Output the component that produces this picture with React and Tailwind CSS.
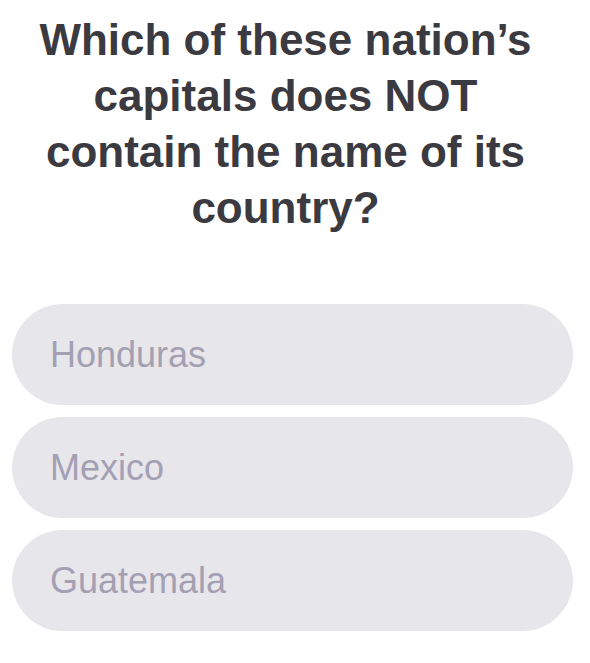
import React from "react";

const options = ["Honduras", "Mexico", "Guatemala"];

const OptionPill = ({ label }) => (
  <button
    type="button"
    className="flex h-[101px] w-full items-center rounded-full bg-[#e7e6ea] pl-[38px] text-left text-[36px] leading-none text-[#a4a0b3]"
  >
    {label}
  </button>
);

export default function App() {
  return (
    <div className="min-h-screen bg-white pl-3 pr-[17px] pt-3 font-['Liberation_Sans',Arial,sans-serif]">
      <h1 className="pl-4 pr-[30px] text-center text-[44px] font-bold leading-[56px] text-[#3b3a41]">
        Which of these nation’s capitals does NOT contain the name of its country?
      </h1>

      <div className="mt-[68px] flex flex-col gap-3">
        {options.map((o) => (
          <OptionPill key={o} label={o} />
        ))}
      </div>
    </div>
  );
}
